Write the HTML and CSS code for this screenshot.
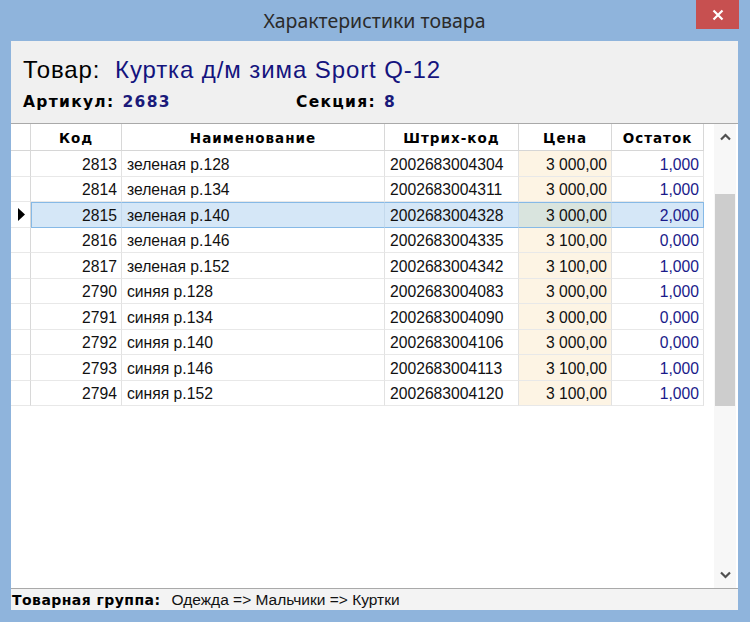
FILE: index.html
```html
<!DOCTYPE html>
<html lang="ru">
<head>
<meta charset="utf-8">
<title>Характеристики товара</title>
<link rel="stylesheet" href="styles.css">
</head>
<body>
<div class="window">
  <div class="titlebar">
    <span class="title">Характеристики товара</span>
    <div class="close"><svg width="14" height="12" viewBox="0 0 14 12"><path d="M2.5 1.5 L11.5 10.5 M11.5 1.5 L2.5 10.5" stroke="#fff" stroke-width="2.2"/></svg></div>
  </div>
  <div class="client">
    <div class="panel">
      <div class="line1"><span class="lbl">Товар:</span><span class="prod">Куртка д/м зима Sport Q-12</span></div>
      <div class="line2">
        <div class="grp"><span class="blbl">Артикул:</span><span class="bval">2683</span></div>
        <div class="grp"><span class="blbl">Секция:</span><span class="bval">8</span></div>
      </div>
    </div>
    <div class="gridbox">
      <div class="table">
        <div class="row head">
          <div class="c ind"></div>
          <div class="c">Код</div>
          <div class="c">Наименование</div>
          <div class="c">Штрих-код</div>
          <div class="c">Цена</div>
          <div class="c">Остаток</div>
        </div>
        <div class="row"><div class="c ind"></div><div class="c r">2813</div><div class="c l">зеленая р.128</div><div class="c l">2002683004304</div><div class="c r price">3 000,00</div><div class="c r qty">1,000</div></div>
        <div class="row"><div class="c ind"></div><div class="c r">2814</div><div class="c l">зеленая р.134</div><div class="c l">2002683004311</div><div class="c r price">3 000,00</div><div class="c r qty">1,000</div></div>
        <div class="row sel"><div class="c ind"><svg width="9" height="13" viewBox="0 0 9 13"><path d="M1 0 L8 6.5 L1 13 Z" fill="#000"/></svg></div><div class="c r first">2815</div><div class="c l">зеленая р.140</div><div class="c l">2002683004328</div><div class="c r price">3 000,00</div><div class="c r qty last">2,000</div></div>
        <div class="row"><div class="c ind"></div><div class="c r">2816</div><div class="c l">зеленая р.146</div><div class="c l">2002683004335</div><div class="c r price">3 100,00</div><div class="c r qty">0,000</div></div>
        <div class="row"><div class="c ind"></div><div class="c r">2817</div><div class="c l">зеленая р.152</div><div class="c l">2002683004342</div><div class="c r price">3 100,00</div><div class="c r qty">1,000</div></div>
        <div class="row"><div class="c ind"></div><div class="c r">2790</div><div class="c l">синяя р.128</div><div class="c l">2002683004083</div><div class="c r price">3 000,00</div><div class="c r qty">1,000</div></div>
        <div class="row"><div class="c ind"></div><div class="c r">2791</div><div class="c l">синяя р.134</div><div class="c l">2002683004090</div><div class="c r price">3 000,00</div><div class="c r qty">0,000</div></div>
        <div class="row"><div class="c ind"></div><div class="c r">2792</div><div class="c l">синяя р.140</div><div class="c l">2002683004106</div><div class="c r price">3 000,00</div><div class="c r qty">0,000</div></div>
        <div class="row"><div class="c ind"></div><div class="c r">2793</div><div class="c l">синяя р.146</div><div class="c l">2002683004113</div><div class="c r price">3 100,00</div><div class="c r qty">1,000</div></div>
        <div class="row"><div class="c ind"></div><div class="c r">2794</div><div class="c l">синяя р.152</div><div class="c l">2002683004120</div><div class="c r price">3 100,00</div><div class="c r qty">1,000</div></div>
      </div>
      <div class="filler"></div>
      <div class="scrollbar">
        <div class="arrow"><svg width="11" height="8" viewBox="0 0 11 8"><path d="M1 6.5 L5.5 2 L10 6.5" fill="none" stroke="#505050" stroke-width="2.2"/></svg></div>
        <div class="track">
          <div class="thumb"></div>
        </div>
        <div class="arrow"><svg width="11" height="8" viewBox="0 0 11 8"><path d="M1 1.5 L5.5 6 L10 1.5" fill="none" stroke="#505050" stroke-width="2.2"/></svg></div>
      </div>
    </div>
    <div class="status"><span class="slbl">Товарная группа:</span><span class="sval">Одежда =&gt; Мальчики =&gt; Куртки</span></div>
  </div>
</div>
</body>
</html>
```
FILE: styles.css
```css
* { box-sizing: border-box; }
html, body { margin: 0; padding: 0; }
body {
  width: 750px;
  height: 622px;
  background: #8fb4dc;
  font-family: "Liberation Sans", Arial, sans-serif;
  overflow: hidden;
}
.window {
  width: 750px;
  height: 622px;
  display: flex;
  flex-direction: column;
}
.titlebar {
  position: relative;
  height: 41px;
  flex: none;
  display: flex;
  justify-content: center;
  align-items: center;
}
.title {
  font-family: "Noto Sans", "Open Sans", sans-serif;
  font-size: 19.5px;
  color: #2b2b2b;
  margin-left: -1px;
  margin-top: -1px;
}
.close {
  position: absolute;
  right: 11px;
  top: 0;
  width: 43px;
  height: 29px;
  background: #c75050;
  display: flex;
  align-items: center;
  justify-content: center;
}
.client {
  margin: 0 12px 12px 11px;
  flex: 1;
  background: #f0f0f0;
  display: flex;
  flex-direction: column;
}
.panel {
  height: 82px;
  flex: none;
  padding: 14px 0 0 12px;
}
.line1 {
  height: 30px;
  display: flex;
  align-items: center;
  font-size: 24px;
  letter-spacing: 0.9px;
  white-space: nowrap;
}
.lbl { color: #000; width: 92px; }
.prod { color: #14147e; }
.line2 {
  margin-top: 6px;
  height: 22px;
  display: flex;
  align-items: center;
  font-family: "DejaVu Sans", Verdana, sans-serif;
  font-weight: bold;
  font-size: 15.5px;
  letter-spacing: 1.3px;
  white-space: nowrap;
}
.grp:first-child { width: 273px; }
.blbl { color: #000; margin-right: 8px; }
.bval { color: #1a1a7a; }
.gridbox {
  height: 465px;
  flex: none;
  background: #fff;
  border-top: 1px solid #a9a9a9;
  display: flex;
}
.table {
  width: 693px;
  flex: none;
  display: flex;
  flex-direction: column;
}
.row {
  display: grid;
  grid-template-columns: 20px 91px 263px 134px 93px 92px;
  height: 25.5px;
}
.row.head { height: 27px; }
.c {
  border-right: 1px solid #e2e2e2;
  border-bottom: 1px solid #e8e8e8;
  display: flex;
  align-items: center;
  font-size: 15.7px;
  color: #111;
  white-space: nowrap;
  padding-top: 3px;
}
.head .c {
  justify-content: center;
  font-family: "DejaVu Sans", Verdana, sans-serif;
  font-weight: bold;
  font-size: 13.5px;
  letter-spacing: 1px;
  color: #000;
  border-bottom: 1px solid #d6d6d6;
  border-right: 1px solid #d8d8d8;
  padding-top: 2px;
}
.c.ind { justify-content: center; border-right: 1px solid #d8d8d8; padding-top: 1px; }
.c.r { justify-content: flex-end; padding-right: 4px; }
.c.l { padding-left: 5px; }
.c.price { background: #fdf4e4; }
.c.qty { color: #1a1a8a; }
.row.sel .c:not(.ind) {
  background: #d5e7f7;
  border-top: 1px solid #86b9e6;
  border-bottom: 1px solid #86b9e6;
  border-right-color: #c4d9ec;
  padding-top: 2px;
}
.row.sel .c.price { background: #d9e4de; }
.row.sel .c.first { border-left: 1px solid #86b9e6; }
.row.sel .c.last { border-right: 1px solid #86b9e6; }
.row.sel .c.ind { padding-left: 2px; }
.filler { flex: 1; }
.scrollbar {
  width: 22px;
  flex: none;
  margin-right: 2px;
  background: #f7f7f7;
  display: flex;
  flex-direction: column;
}
.arrow {
  height: 26px;
  flex: none;
  display: flex;
  align-items: center;
  justify-content: center;
}
.track {
  flex: 1;
  padding-top: 44px;
}
.thumb {
  height: 212px;
  margin: 0 1px;
  background: #cdcdcd;
}
.status {
  height: 22px;
  flex: none;
  border-top: 1px solid #a9a9a9;
  background: #f3f3f3;
  display: flex;
  align-items: center;
  padding-left: 1px;
  white-space: nowrap;
}
.slbl {
  font-family: "DejaVu Sans", Verdana, sans-serif;
  font-weight: bold;
  font-size: 14px;
  letter-spacing: 0.45px;
  color: #000;
  margin-right: 11px;
}
.sval {
  font-size: 15.5px;
  color: #111;
}
```
